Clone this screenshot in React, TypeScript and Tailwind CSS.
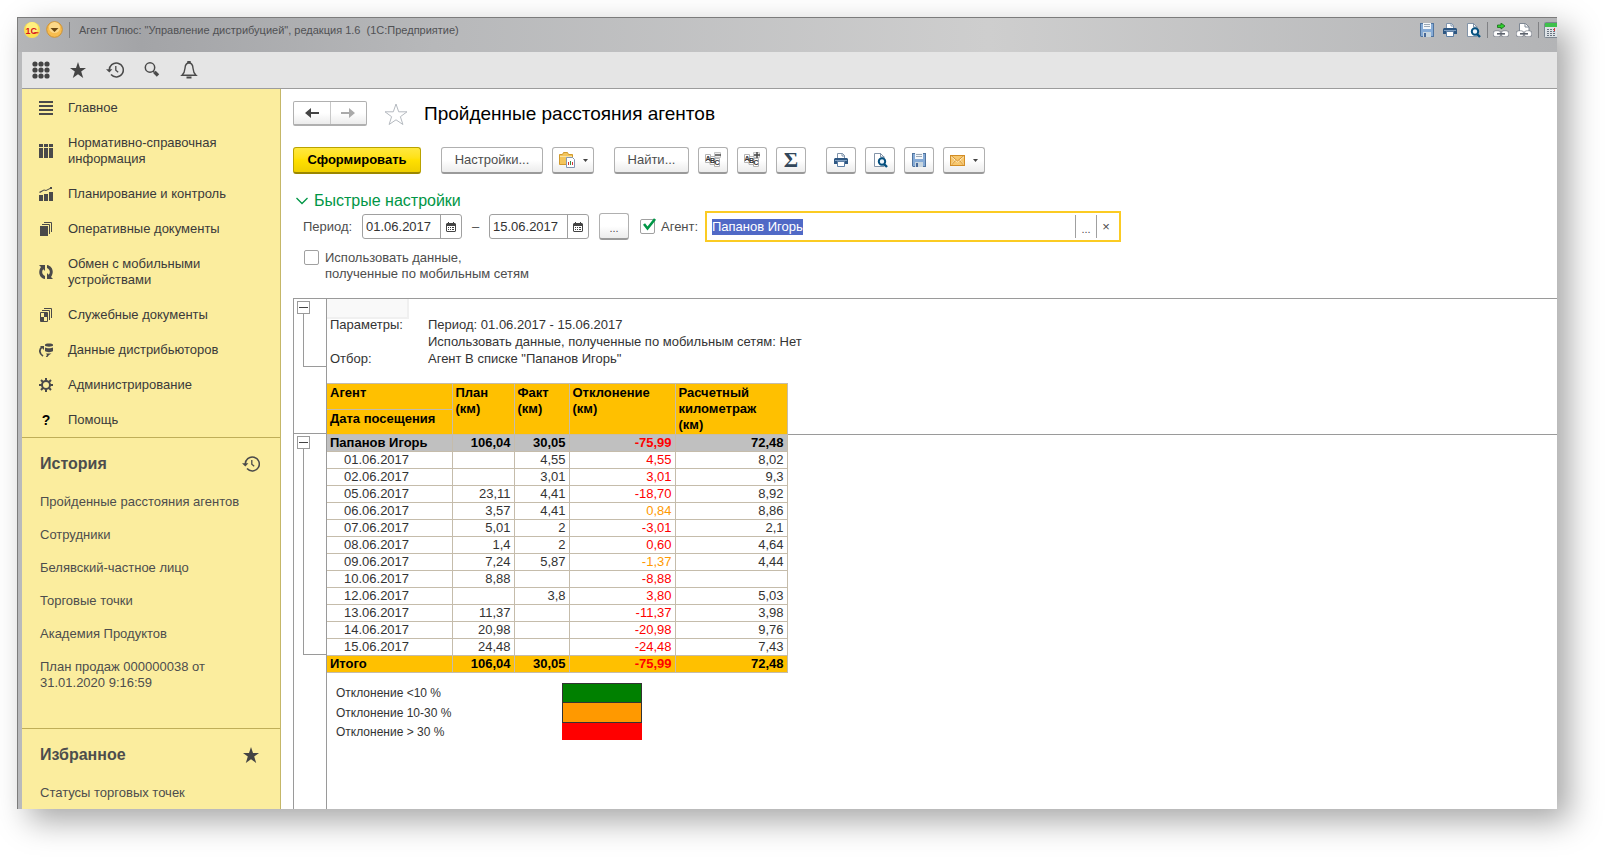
import React, { FC, ReactNode, useEffect, useRef, useState } from 'react';

/* ---------- icons ---------- */

const HistoryIcon = () => (
  <svg width="18" height="18" viewBox="0 0 18 18" fill="none" stroke="#4a4a4a" strokeWidth="1.5" aria-hidden="true">
    <path d="M3.3 9.5A7 7 0 1 1 5 13.6" />
    <path d="M0 8.2h6.4L3.3 11.6z" fill="#4a4a4a" stroke="none" />
    <path d="M9.8 5v4.2l2.4 2" strokeWidth="1.3" />
  </svg>
);

const StarIcon = () => (
  <svg width="18" height="18" viewBox="0 0 18 18" fill="#444" aria-hidden="true">
    <path d="M9 1l2 6h6l-4.8 3.6L14.2 17 9 13.2 3.8 17l2-6.4L1 7h6z" />
  </svg>
);

const SaveIcon = () => (
  <svg width="14" height="14" viewBox="0 0 14 14" aria-hidden="true">
    <path d="M0 0h14v14H1l-1-1z" fill="#50749f" />
    <path d="M1 1h12v12H1z" fill="#86abd6" />
    <path d="M3 0h8v6H3z" fill="#f4f7fa" />
    <path d="M4 1.5h6M4 3.5h6" stroke="#9aa7b5" />
    <path d="M3 9h8v5H3z" fill="#c9d6df" />
    <path d="M4 10h2v4H4z" fill="#47699a" />
  </svg>
);

const PrintIcon = () => (
  <svg width="14" height="14" viewBox="0 0 14 14" aria-hidden="true">
    <path d="M3.5 6V.5h5l2 2V6" fill="#fff" stroke="#7f93ab" />
    <path d="M8 0v3h3" fill="none" stroke="#7f93ab" />
    <path d="M1 5h12l1 1v5H0V6z" fill="#2e5782" />
    <path d="M1 7.5h12" stroke="#7f9fc1" />
    <path d="M3.5 8.500h7v5h-7z" fill="#fff" stroke="#5d7fa5" />
  </svg>
);

const PreviewIcon = () => (
  <svg width="15" height="15" viewBox="0 0 15 15" aria-hidden="true">
    <path d="M1.5.5h6L11 4v9.5H1.5z" fill="#fff" stroke="#8394a8" />
    <path d="M7.5 0v4h4" fill="none" stroke="#8394a8" />
    <circle cx="9" cy="8.5" r="3.2" fill="#eef5fb" stroke="#05507f" strokeWidth="2" />
    <path d="M11 11l3 3" stroke="#05507f" strokeWidth="2.4" />
  </svg>
);

const Chain = () => (
  <>
    <rect x="1" y="8.5" width="6" height="4.5" rx="1.5" fill="none" stroke="#7b818b" strokeWidth="2" />
    <rect x="9" y="8.5" width="6" height="4.5" rx="1.5" fill="none" stroke="#7b818b" strokeWidth="2" />
    <rect x="1" y="8.5" width="6" height="4.5" rx="1.5" fill="#fff" stroke="#f2f2f4" strokeWidth=".8" />
    <rect x="9" y="8.5" width="6" height="4.5" rx="1.5" fill="#fff" stroke="#f2f2f4" strokeWidth=".8" />
    <path d="M4 10.8h8" stroke="#5c626c" strokeWidth="1.6" />
  </>
);

const LinkIcon = () => (
  <svg width="16" height="15" viewBox="0 0 16 15" aria-hidden="true">
    <path d="M4.500 2H8V0l4 3-4 3V4.500H4.500z" fill="#2fd12f" stroke="#186c18" strokeWidth=".8" />
    <Chain />
  </svg>
);

const PageLinkIcon = () => (
  <svg width="16" height="15" viewBox="0 0 16 15" aria-hidden="true">
    <path d="M3.5 9V.5h6L13 4v5" fill="#fff" stroke="#7f8894" />
    <path d="M9 .5V4h4" fill="none" stroke="#7f8894" />
    <Chain />
  </svg>
);

const CalculatorIcon = () => (
  <svg width="17" height="16" viewBox="0 0 17 16" aria-hidden="true">
    <rect x=".5" y=".5" width="16" height="15" rx="1" fill="#dde2e6" stroke="#7d8791" />
    <path d="M1 1h15v4H1z" fill="#3fc04c" />
    <path d="M3 7.5h9M3 9.5h9M3 11.5h9M3 13.5h9" stroke="#6a7480" strokeDasharray="2 1" />
    <path d="M10 6h1v3h-1z" fill="#e33" />
  </svg>
);

const CalendarIcon = () => (
  <svg width="10" height="10" viewBox="0 0 10 10" fill="#444" aria-hidden="true">
    <path fillRule="evenodd" d="M1 1h1V0h1v1h4V0h1v1h1l1 1v7L9 10H1L0 9V2zM1 4v5h8V4z" />
    <path d="M2 5h1v1H2zM4 5h1v1H4zM6 5h2v1H6zM2 7h1v1H2zM4 7h1v1H4zM6 7h2v1H6z" />
  </svg>
);

const ArrowIcon = ({ color, flip }: { color: string; flip?: boolean }) => (
  <svg width="14" height="10" viewBox="0 0 14 10" fill={color} aria-hidden="true">
    {flip ? <path d="M0 4h8V0l6 5-6 5V6H0z" /> : <path d="M14 4H6V0L0 5l6 5V6h8z" />}
  </svg>
);

const Caret = () => (
  <svg width="5" height="3" viewBox="0 0 5 3" fill="#444" aria-hidden="true">
    <path d="M0 0h5L2.500 3z" />
  </svg>
);

const GroupIcon = ({ plus }: { plus?: boolean }) => (
  <svg width="17" height="16" viewBox="0 0 17 16" fill="none" aria-hidden="true">
    <path d="M9.500.5h6v5h-6z" fill="#eee" stroke="#c4c4c4" />
    <path d={plus ? 'M10 3h6M13 0v6' : 'M10 3h6'} stroke="#444" strokeWidth="1.4" />
    <path d="M.5 2.5h5v8h-5zM5 4.500h5v8H5zM9.500 6.500h5v8h-5z" fill="#fff" stroke="#b4b4b4" />
    <g fill="#333" fontFamily="Liberation Sans" fontSize="7" fontWeight="bold">
      <text x="0.5" y="9">A</text>
      <text x="5" y="11">B</text>
      <text x="9.5" y="13">C</text>
    </g>
  </svg>
);

const FolderIcon = () => (
  <svg width="17" height="16" viewBox="0 0 17 16" aria-hidden="true">
    <path d="M.5 2.500h3l1-2h4l1 2h4v10H.5z" fill="#f3c55c" stroke="#d09a2e" />
    <path d="M1 4.500h12" stroke="#fae3a4" />
    <path d="M7.500 5.500h6l2 2v8h-8z" fill="#fff" stroke="#8397b4" />
    <path d="M9.500 13v-3" stroke="#c33" />
    <path d="M11.500 13V9" stroke="#3a8a4a" />
    <path d="M13.500 13v-3" stroke="#d33" />
  </svg>
);

const MailIcon = () => (
  <svg width="15" height="11" viewBox="0 0 15 11" aria-hidden="true">
    <rect x=".5" y=".5" width="14" height="10" fill="#f7c76e" stroke="#d28d25" />
    <path d="M1 1.500L7.500 7 14 1.500M1 10l4.500-5M14 10L9.500 5" fill="none" stroke="#fff0cf" />
    <path d="M1 .5L7.500 6 14 .5M1 10.500l4.500-5M14 10.500l-4.500-5" fill="none" stroke="#cf8a26" strokeWidth=".8" />
  </svg>
);

const menuIcons: Record<string, ReactNode> = {
  main: <path d="M0 0h14v2H0zM0 4h14v2H0zM0 8h14v2H0zM0 12h14v2H0z" />,
  tables: <path d="M0 0h4v3H0zM5 0h4v3H5zM10 0h4v3h-4zM0 4h4v10H0zM5 4h4v10H5zM10 4h4v10h-4z" />,
  plan: <path d="M0 8h4v6H0zM5 7h4v7H5zM10 5h4v9h-4zM0 5l5-2.500 2 .5 4-2V0h2v2h-2L7 4 5 3.500 1 6z" />,
  docs: (
    <>
      <path d="M1 4h8v10H1z" />
      <path d="M3 2.500h7.500V12M5 .5h7.500V10" fill="none" stroke="#4a4a4a" />
    </>
  ),
  sync: (
    <>
      <path d="M0 0h6v6L4.300 4.300C2.300 6.500 3 9.500 6 11v3C.5 13-1.500 7 2 2z" />
      <path d="M14 14H8V8l1.700 1.700C11.700 7.500 11 4.500 8 3V0c5.500 1 7.500 7 4 12z" />
    </>
  ),
  service: (
    <>
      <path d="M1.500 4.500h7v9h-7z" fill="none" stroke="#4a4a4a" />
      <path d="M5 5h3v4H5zM2 9h3v4H2z" />
      <path d="M3 2.500h7.500V12M5 .5h7.500V10" fill="none" stroke="#4a4a4a" />
    </>
  ),
  data: (
    <>
      <path d="M6 1.500C6 0 14 0 14 1.500v1C14 4 6 4 6 2.500zM6 4.500c2 1 6 1 8 0V8c-1 1.500-7 1.500-8 0zM7 10.500h5.500L10 12l-2 2.500H6.500L8 12z" />
      <path d="M4 13C0 10.500 0 6.500 3 4" fill="none" stroke="#4a4a4a" strokeWidth="1.8" />
      <path d="M1 3h4v4z" />
    </>
  ),
  admin: (
    <>
      <circle cx="7" cy="7" r="4" fill="none" stroke="#4a4a4a" strokeWidth="2" />
      <path
        d="M7 0v3M7 11v3M0 7h3M11 7h3M2 2l2.200 2.200M9.800 9.800L12 12M12 2L9.800 4.200M4.200 9.800L2 12"
        stroke="#4a4a4a"
        strokeWidth="2"
      />
    </>
  ),
};

/* ---------- data ---------- */

const menu = [
  { icon: 'main', title: 'Главное' },
  { icon: 'tables', title: 'Нормативно-справочная информация' },
  { icon: 'plan', title: 'Планирование и контроль' },
  { icon: 'docs', title: 'Оперативные документы' },
  { icon: 'sync', title: 'Обмен с мобильными устройствами' },
  { icon: 'service', title: 'Служебные документы' },
  { icon: 'data', title: 'Данные дистрибьюторов' },
  { icon: 'admin', title: 'Администрирование' },
  { icon: 'help', title: 'Помощь' },
];

const history = [
  'Пройденные расстояния агентов',
  'Сотрудники',
  'Белявский-частное лицо',
  'Торговые точки',
  'Академия Продуктов',
  'План продаж 000000038 от 31.01.2020 9:16:59',
];

interface Row {
  date: string;
  plan: string;
  fact: string;
  diff: string;
  distance: string;
  warn?: boolean;
}

const rows: Row[] = [
  { date: '01.06.2017', plan: '', fact: '4,55', diff: '4,55', distance: '8,02' },
  { date: '02.06.2017', plan: '', fact: '3,01', diff: '3,01', distance: '9,3' },
  { date: '05.06.2017', plan: '23,11', fact: '4,41', diff: '-18,70', distance: '8,92' },
  { date: '06.06.2017', plan: '3,57', fact: '4,41', diff: '0,84', distance: '8,86', warn: true },
  { date: '07.06.2017', plan: '5,01', fact: '2', diff: '-3,01', distance: '2,1' },
  { date: '08.06.2017', plan: '1,4', fact: '2', diff: '0,60', distance: '4,64' },
  { date: '09.06.2017', plan: '7,24', fact: '5,87', diff: '-1,37', distance: '4,44', warn: true },
  { date: '10.06.2017', plan: '8,88', fact: '', diff: '-8,88', distance: '' },
  { date: '12.06.2017', plan: '', fact: '3,8', diff: '3,80', distance: '5,03' },
  { date: '13.06.2017', plan: '11,37', fact: '', diff: '-11,37', distance: '3,98' },
  { date: '14.06.2017', plan: '20,98', fact: '', diff: '-20,98', distance: '9,76' },
  { date: '15.06.2017', plan: '24,48', fact: '', diff: '-24,48', distance: '7,43' },
];

/* ---------- window chrome ---------- */

const TitleBar = () => (
  <header className="flex h-[35px] items-start justify-between overflow-hidden border-t border-[#7c7c7c] bg-[linear-gradient(90deg,#b4b5b7_0%,#a3a4a7_8%,#b7b8ba_27%,#cecece_63%,#b3b4b6_100%)] pl-1.5">
    <div className="flex items-center pt-[3px]">
      <svg width="16" height="16" viewBox="0 0 16 16" aria-hidden="true">
        <circle cx="8" cy="8" r="8" fill="#fbe04f" />
        <circle cx="8" cy="6" r="6" fill="#fff07f" />
        <text x="1.5" y="11.500" fill="#d8161b" fontFamily="Liberation Sans" fontSize="9" fontWeight="bold">1C</text>
        <path d="M9.500 10.800h5" stroke="#d8161b" />
      </svg>
      <button type="button" aria-label="Меню" className="ml-1.5">
        <svg width="17" height="17" viewBox="0 0 17 17">
          <circle cx="8.5" cy="8.5" r="7.8" fill="#f8bd4f" stroke="#cf9232" />
          <circle cx="8.5" cy="6.5" r="5.5" fill="#fcd88a" />
          <path d="M4.500 7h8l-4 4z" fill="#6b4713" />
        </svg>
      </button>
      <span className="ml-1.5 h-4 w-px bg-[#808184]" />
      <span className="ml-[9px] text-[11px] text-[#505154]">
        Агент Плюс: "Управление дистрибуцией", редакция 1.6&nbsp; (1С:Предприятие)
      </span>
    </div>
    <div className="flex items-center pt-1">
      <button type="button" aria-label="Сохранить"><SaveIcon /></button>
      <button type="button" aria-label="Печать" className="ml-[9px]"><PrintIcon /></button>
      <button type="button" aria-label="Просмотр" className="ml-[9px]"><PreviewIcon /></button>
      <span className="ml-1.5 h-4 w-px bg-[#808184]" />
      <button type="button" aria-label="Получить ссылку" className="ml-[5px]"><LinkIcon /></button>
      <button type="button" aria-label="Перейти по ссылке" className="ml-[7px]"><PageLinkIcon /></button>
      <span className="ml-1.5 h-4 w-px bg-[#808184]" />
      <button type="button" aria-label="Калькулятор" className="-mr-1 ml-[5px]"><CalculatorIcon /></button>
    </div>
  </header>
);

const TopTools = () => (
  <nav aria-label="Инструменты" className="flex h-[37px] items-center gap-[19px] border-b border-[#9c9c9c] bg-[#e5e5e5] pl-2.5">
    <button type="button" aria-label="Меню функций">
      <svg width="18" height="18" viewBox="0 0 18 18" fill="#444">
        {[3, 9, 15].map((y) => [3, 9, 15].map((x) => <circle key={`${x}-${y}`} cx={x} cy={y} r="2.6" />))}
      </svg>
    </button>
    <button type="button" aria-label="Избранное"><StarIcon /></button>
    <button type="button" aria-label="История"><HistoryIcon /></button>
    <button type="button" aria-label="Поиск">
      <svg width="18" height="18" viewBox="0 0 18 18" fill="none" stroke="#4a4a4a">
        <circle cx="7" cy="6.5" r="4.7" strokeWidth="1.5" />
        <path d="M10 10l1.500 1.500" strokeWidth="1.5" />
        <path d="M11.500 11l3.500 3.500" strokeWidth="3.4" />
      </svg>
    </button>
    <button type="button" aria-label="Оповещения">
      <svg width="18" height="18" viewBox="0 0 18 18" fill="none" stroke="#4a4a4a" strokeWidth="1.4">
        <path d="M8 2V.5h2V2M2 14.300c2-1.800 2.800-4 3-7C5.200 4 6.500 2 9 2s3.800 2 4 5.300c.2 3 1 5.200 3 7z" />
        <path d="M6.500 16.500h5" strokeWidth="2" />
      </svg>
    </button>
  </nav>
);

const Sidebar = () => (
  <aside className="w-[259px] shrink-0 border-r border-[#c5b768] bg-[#fbed9e] pb-2">
    <nav aria-label="Разделы" className="border-b border-[#bfae58] pt-px">
      {menu.map((item) => (
        <a key={item.title} href="#" className="flex items-center gap-[15px] pt-[10px] pb-[9px] pr-10 pl-[17px] text-[#3a3a3a]">
          {item.icon === 'help' ? (
            <span className="w-3.5 shrink-0 text-center text-sm leading-4 font-bold text-black">?</span>
          ) : (
            <svg width="14" height="14" viewBox="0 0 14 14" fill="#4a4a4a" className="shrink-0" aria-hidden="true">
              {menuIcons[item.icon]}
            </svg>
          )}
          <span>{item.title}</span>
        </a>
      ))}
    </nav>
    <section className="border-b border-[#bfae58] pt-4 pr-5 pb-[37px] pl-[18px] text-[#4d4d4d]">
      <div className="flex items-center justify-between">
        <h2 className="text-base leading-5 font-bold">История</h2>
        <HistoryIcon />
      </div>
      <ul className="mt-5 flex flex-col gap-[17px] pr-3">
        {history.map((item) => (
          <li key={item}>
            <a href="#">{item}</a>
          </li>
        ))}
      </ul>
    </section>
    <section className="pt-4 pr-5 pl-[18px] text-[#4d4d4d]">
      <div className="flex items-center justify-between">
        <h2 className="text-base leading-5 font-bold">Избранное</h2>
        <StarIcon />
      </div>
      <a href="#" className="mt-5 block">Статусы торговых точек</a>
    </section>
  </aside>
);

/* ---------- form ---------- */

interface ToolButtonProps {
  label?: string;
  className: string;
  children: ReactNode;
}

const ToolButton: FC<ToolButtonProps> = ({ label, className, children }) => (
  <button
    type="button"
    aria-label={label}
    className={`flex h-[27px] shrink-0 items-center justify-center rounded-[3px] border border-b-2 border-[#b0b0b0] border-b-[#9a9a9a] bg-linear-to-b from-white from-50% to-[#ececec] text-[#4d4d4d] ${className}`}
  >
    {children}
  </button>
);

const CommandBar = () => (
  <div className="mt-[21px] flex items-center gap-[9px]">
    <button
      type="button"
      className="mr-[11px] h-[27px] w-32 rounded-[3px] border border-b-2 border-[#b9a200] border-b-[#9b8700] bg-linear-to-b from-[#ffe83c] via-[#ffe000] to-[#efcf00] font-bold text-black"
    >
      Сформировать
    </button>
    <ToolButton className="w-[102px]">Настройки...</ToolButton>
    <ToolButton label="Варианты отчета" className="mr-[11px] w-[42px] gap-[7px]"><FolderIcon /><Caret /></ToolButton>
    <ToolButton className="w-[75px]">Найти...</ToolButton>
    <ToolButton label="Свернуть группы" className="w-[30px]"><GroupIcon /></ToolButton>
    <ToolButton label="Развернуть группы" className="w-[30px]"><GroupIcon plus /></ToolButton>
    <ToolButton label="Сумма" className="mr-[11px] w-[30px]">
      <span className="font-['Liberation_Serif',serif] text-[22px] leading-5 font-bold text-[#33475a]">Σ</span>
    </ToolButton>
    <ToolButton label="Печать" className="w-[30px]"><PrintIcon /></ToolButton>
    <ToolButton label="Просмотр" className="w-[30px]"><PreviewIcon /></ToolButton>
    <ToolButton label="Сохранить" className="w-[30px]"><SaveIcon /></ToolButton>
    <ToolButton label="Отправить" className="w-[42px] gap-2"><MailIcon /><Caret /></ToolButton>
  </div>
);

interface DateFieldProps {
  id: string;
  label: string;
  value: string;
  onChange: (value: string) => void;
}

const DateField: FC<DateFieldProps> = ({ id, label, value, onChange }) => (
  <div className="flex h-[25px] w-[100px] rounded-[3px] border border-[#a0a0a0] bg-white">
    <input
      id={id}
      type="text"
      aria-label={label}
      className="w-[77px] pl-[3px] text-[#333] outline-none"
      value={value}
      onChange={(e) => onChange(e.target.value)}
    />
    <button type="button" aria-label="Выбрать дату" className="flex flex-1 items-center justify-center border-l border-[#a0a0a0]">
      <CalendarIcon />
    </button>
  </div>
);

const QuickSettings = () => {
  const [from, setFrom] = useState('01.06.2017');
  const [to, setTo] = useState('15.06.2017');
  const [byAgent, setByAgent] = useState(true);
  const [agent, setAgent] = useState('Папанов Игорь');
  const [useMobile, setUseMobile] = useState(false);
  const agentRef = useRef<HTMLInputElement>(null);

  useEffect(() => {
    agentRef.current?.focus();
    agentRef.current?.select();
  }, []);

  return (
    <section className="mt-[17px]">
      <button type="button" className="flex items-center gap-1.5 pl-[3px] text-base leading-5 text-[#009646]">
        <svg width="12" height="8" viewBox="0 0 12 8" fill="none" stroke="#009646" strokeWidth="1.3" aria-hidden="true">
          <path d="M.5 1L6 6.500 11.500 1" />
        </svg>
        Быстрые настройки
      </button>
      <div className="flex items-center pl-2.5 text-[#4d4d4d]">
        <label htmlFor="from" className="w-[59px]">Период:</label>
        <DateField id="from" label="Начало периода" value={from} onChange={setFrom} />
        <span className="w-[27px] text-center">–</span>
        <DateField id="to" label="Конец периода" value={to} onChange={setTo} />
        <ToolButton label="Выбрать период" className="mr-[11px] ml-2.5 w-[30px] pt-1 text-[11px]">...</ToolButton>
        <span className="relative flex size-[15px]">
          <input
            id="byAgent"
            type="checkbox"
            className="size-[15px] appearance-none rounded-[2px] border border-[#a0a0a0] bg-white"
            checked={byAgent}
            onChange={(e) => setByAgent(e.target.checked)}
          />
          {byAgent && (
            <svg width="14" height="13" viewBox="0 0 14 13" className="pointer-events-none absolute -top-px left-[3px]" aria-hidden="true">
              <path d="M1 6l3.500 4.500L12 1" fill="none" stroke="#009646" strokeWidth="2.6" />
            </svg>
          )}
        </span>
        <label htmlFor="byAgent" className="w-[50px] pl-1.5">Агент:</label>
        <div className="flex h-[31px] w-[416px] items-center border-2 border-[#fbcb23] bg-white">
          <input
            ref={agentRef}
            type="text"
            aria-label="Агент"
            className="h-4 min-w-0 flex-1 pl-[5px] text-[#333] outline-none selection:bg-[#5069c6] selection:text-white"
            value={agent}
            onChange={(e) => setAgent(e.target.value)}
          />
          <button type="button" aria-label="Выбрать агента" className="h-[23px] w-[21px] border-l border-[#a0a0a0] pt-1 text-[11px]">...</button>
          <button type="button" aria-label="Очистить" className="h-[23px] w-[23px] border-l border-[#a0a0a0] pr-1" onClick={() => setAgent('')}>×</button>
        </div>
      </div>
      <div className="mt-2 flex gap-1.5 pl-[11px] text-[#4d4d4d]">
        <input
          id="useMobile"
          type="checkbox"
          className="size-[15px] appearance-none rounded-[2px] border border-[#a0a0a0] bg-white"
          checked={useMobile}
          onChange={(e) => setUseMobile(e.target.checked)}
        />
        <label htmlFor="useMobile">
          Использовать данные,
          <br />
          полученные по мобильным сетям
        </label>
      </div>
    </section>
  );
};

/* ---------- report ---------- */

const GroupToggle = ({ className }: { className: string }) => (
  <div className={`flex flex-col pl-[3px] ${className}`}>
    <button type="button" aria-label="Свернуть" className="flex size-[13px] shrink-0 items-center justify-center border border-[#9a9a9a] bg-white">
      <span className="h-px w-[9px] bg-[#444]" />
    </button>
    <span className="ml-1.5 flex-1 border-b border-l border-[#9a9a9a]" />
  </div>
);

const cell = 'h-[17px] border border-[#c5bcab] px-[3px] py-0 text-right';
const headCell = 'border border-[#c5bcab] px-[3px] py-px text-left align-top font-bold';

const ReportTable = () => (
  <table className="w-full table-fixed border-collapse text-[#333]">
    <colgroup>
      <col className="w-[125px]" />
      <col className="w-[62px]" />
      <col className="w-[55px]" />
      <col className="w-[106px]" />
      <col className="w-[112px]" />
      <col />
    </colgroup>
    <thead className="border-b border-[#9a9a9a] text-black">
      <tr className="h-[25px] bg-[#ffc000]">
        <th className={`${headCell} border-l-0`}>Агент</th>
        <th rowSpan={2} className={headCell}>План (км)</th>
        <th rowSpan={2} className={headCell}>Факт (км)</th>
        <th rowSpan={2} className={headCell}>Отклонение (км)</th>
        <th rowSpan={2} className={headCell}>Расчетный километраж (км)</th>
        <td rowSpan={2} className="bg-white" />
      </tr>
      <tr className="h-[25px] bg-[#ffc000]">
        <th className={`${headCell} border-l-0`}>Дата посещения</th>
      </tr>
    </thead>
    <tbody>
      <tr className="bg-[#c0c0c0] font-bold text-black">
        <td className={`${cell} border-l-0 text-left!`}>Папанов Игорь</td>
        <td className={cell}>106,04</td>
        <td className={cell}>30,05</td>
        <td className={`${cell} text-[#ff0000]`}>-75,99</td>
        <td className={cell}>72,48</td>
        <td className="bg-white" />
      </tr>
      {rows.map((row) => (
        <tr key={row.date}>
          <td className={`${cell} border-l-0 pl-[17px] text-left!`}>{row.date}</td>
          <td className={cell}>{row.plan}</td>
          <td className={cell}>{row.fact}</td>
          <td className={`${cell} ${row.warn ? 'text-[#ff9900]' : 'text-[#ff0000]'}`}>{row.diff}</td>
          <td className={cell}>{row.distance}</td>
          <td />
        </tr>
      ))}
      <tr className="bg-[#ffc000] font-bold text-black">
        <td className={`${cell} border-l-0 text-left!`}>Итого</td>
        <td className={cell}>106,04</td>
        <td className={cell}>30,05</td>
        <td className={`${cell} text-[#ff0000]`}>-75,99</td>
        <td className={cell}>72,48</td>
        <td className="bg-white" />
      </tr>
    </tbody>
  </table>
);

const Report = () => (
  <section className="mt-4 flex flex-1 border-t border-l border-[#9a9a9a]">
    <div className="w-[33px] shrink-0 border-r border-[#9a9a9a]">
      <div className="h-[135px] border-b border-[#9a9a9a] pt-0.5">
        <GroupToggle className="h-[66px]" />
      </div>
      <GroupToggle className="mt-0.5 h-[219px]" />
    </div>
    <div className="min-w-0 flex-1 text-[#333]">
      <div className="-mb-[3px] h-5 w-[82px] border-r-2 border-b-2 border-[#f0f0f0] bg-[#f9f9f9]" />
      <dl className="grid grid-cols-[98px_1fr] pb-4 pl-[3px] leading-[17px]">
        <dt>Параметры:</dt>
        <dd>
          Период: 01.06.2017 - 15.06.2017
          <br />
          Использовать данные, полученные по мобильным сетям: Нет
        </dd>
        <dt>Отбор:</dt>
        <dd>Агент В списке "Папанов Игорь"</dd>
      </dl>
      <ReportTable />
      <div className="grid grid-cols-[226px_80px] pt-2.5 pl-[9px] text-xs">
        <span className="flex h-5 items-center">Отклонение &lt;10 %</span>
        <span className="border border-[#333] bg-[#008000]" />
        <span className="flex h-5 items-center">Отклонение 10-30 %</span>
        <span className="border border-t-0 border-[#333] bg-[#ff9900]" />
        <span className="flex h-[17px] items-center">Отклонение &gt; 30 %</span>
        <span className="bg-[#ff0000]" />
      </div>
    </div>
  </section>
);

const App = () => (
  <div className="flex min-h-screen bg-white pt-[17px] pr-12 pb-12 pl-[17px] font-['Liberation_Sans',Arial,sans-serif] text-[13px] leading-4">
    <div className="flex min-w-0 flex-1 flex-col border-l border-[#7c7c7c] bg-[#b9babc] shadow-[12px_12px_30px_rgba(0,0,0,0.35)]">
      <TitleBar />
      <div className="ml-1 flex flex-1 flex-col">
        <TopTools />
        <div className="flex flex-1">
          <Sidebar />
          <main className="flex min-w-0 flex-1 flex-col bg-white pt-3 pl-3">
            <div className="flex items-center">
              <div className="flex h-[25px] w-[74px] rounded-[2px] border border-b-2 border-[#b0b0b0] bg-linear-to-b from-white from-50% to-[#ececec]">
                <button type="button" aria-label="Назад" className="flex flex-1 items-center justify-center border-r border-[#c8c8c8]">
                  <ArrowIcon color="#444" />
                </button>
                <button type="button" aria-label="Вперед" className="flex flex-1 items-center justify-center">
                  <ArrowIcon color="#aaa" flip />
                </button>
              </div>
              <button type="button" aria-label="Добавить в избранное" className="ml-[17px]">
                <svg width="24" height="24" viewBox="0 0 24 24" fill="none" stroke="#b5bac0">
                  <path d="M12 2l2.700 7.800H23l-6.600 4.900 2.500 7.800L12 17.800l-6.900 4.700 2.500-7.800L1 9.800h8.300z" />
                </svg>
              </button>
              <h1 className="ml-4 text-[19px] leading-6 text-black">Пройденные расстояния агентов</h1>
            </div>
            <CommandBar />
            <QuickSettings />
            <Report />
          </main>
        </div>
      </div>
    </div>
  </div>
);

export default App;
